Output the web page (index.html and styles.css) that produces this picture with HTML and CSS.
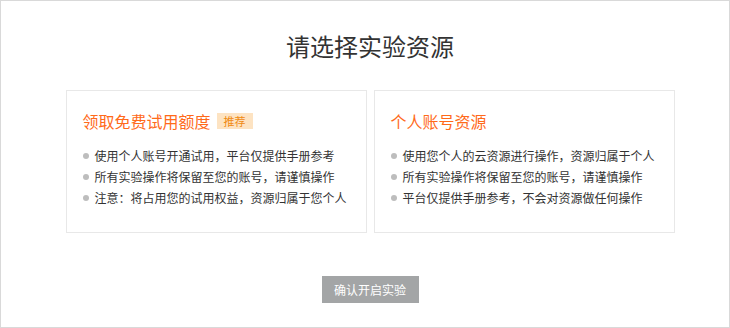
FILE: index.html
```html
<!DOCTYPE html>
<html lang="zh-CN">
<head>
<meta charset="utf-8">
<link rel="stylesheet" href="styles.css">
</head>
<body>
<div class="page">
  <h1 class="title">请选择实验资源</h1>
  <div class="cards">
    <div class="card">
      <div class="card-head">
        <span class="card-title">领取免费试用额度</span>
        <span class="badge">推荐</span>
      </div>
      <ul class="list">
        <li>使用个人账号开通试用，平台仅提供手册参考</li>
        <li>所有实验操作将保留至您的账号，请谨慎操作</li>
        <li>注意：将占用您的试用权益，资源归属于您个人</li>
      </ul>
    </div>
    <div class="card">
      <div class="card-head">
        <span class="card-title">个人账号资源</span>
      </div>
      <ul class="list">
        <li>使用您个人的云资源进行操作，资源归属于个人</li>
        <li>所有实验操作将保留至您的账号，请谨慎操作</li>
        <li>平台仅提供手册参考，不会对资源做任何操作</li>
      </ul>
    </div>
  </div>
  <button class="btn">确认开启实验</button>
</div>
</body>
</html>
```
FILE: styles.css
```css
html, body {
  margin: 0;
  padding: 0;
  background: #fff;
}
body {
  font-family: "Noto Sans CJK SC", "Noto Sans", sans-serif;
  color: #333;
}
.page {
  box-sizing: border-box;
  height: 328px;
  border: 1px solid #d9d9d9;
  padding-left: 10px;
  display: flex;
  flex-direction: column;
  align-items: center;
}
.title {
  margin: 30px 0 0;
  font-size: 24px;
  line-height: 30px;
  font-weight: 400;
  color: #333;
}
.cards {
  margin-top: 29px;
  display: flex;
  gap: 7px;
}
.card {
  box-sizing: border-box;
  width: 301px;
  height: 143px;
  border: 1px solid #e8e8e8;
  padding: 18px 16px 0;
}
.card-head {
  display: flex;
  align-items: center;
  height: 24px;
}
.card-title {
  font-size: 16px;
  line-height: 24px;
  color: #ff6a1a;
}
.badge {
  margin-left: 6px;
  height: 16px;
  padding: 0 7px;
  background: #fde3c2;
  color: #f08a12;
  font-size: 11px;
  line-height: 16px;
}
.list {
  list-style: none;
  margin: 12px 0 0;
  padding: 0;
}
.list li {
  display: flex;
  align-items: center;
  font-size: 12px;
  line-height: 21px;
  color: #333;
  white-space: nowrap;
}
.list li::before {
  content: "";
  width: 6px;
  height: 6px;
  border-radius: 50%;
  background: #bdbdbd;
  margin-right: 6px;
  flex: none;
}
.btn {
  margin-top: 43px;
  width: 97px;
  height: 27px;
  border: none;
  background: #a3a5a6;
  color: #fff;
  font-family: "Noto Sans CJK SC", "Noto Sans", sans-serif;
  font-size: 12px;
  padding: 0;
}
```
